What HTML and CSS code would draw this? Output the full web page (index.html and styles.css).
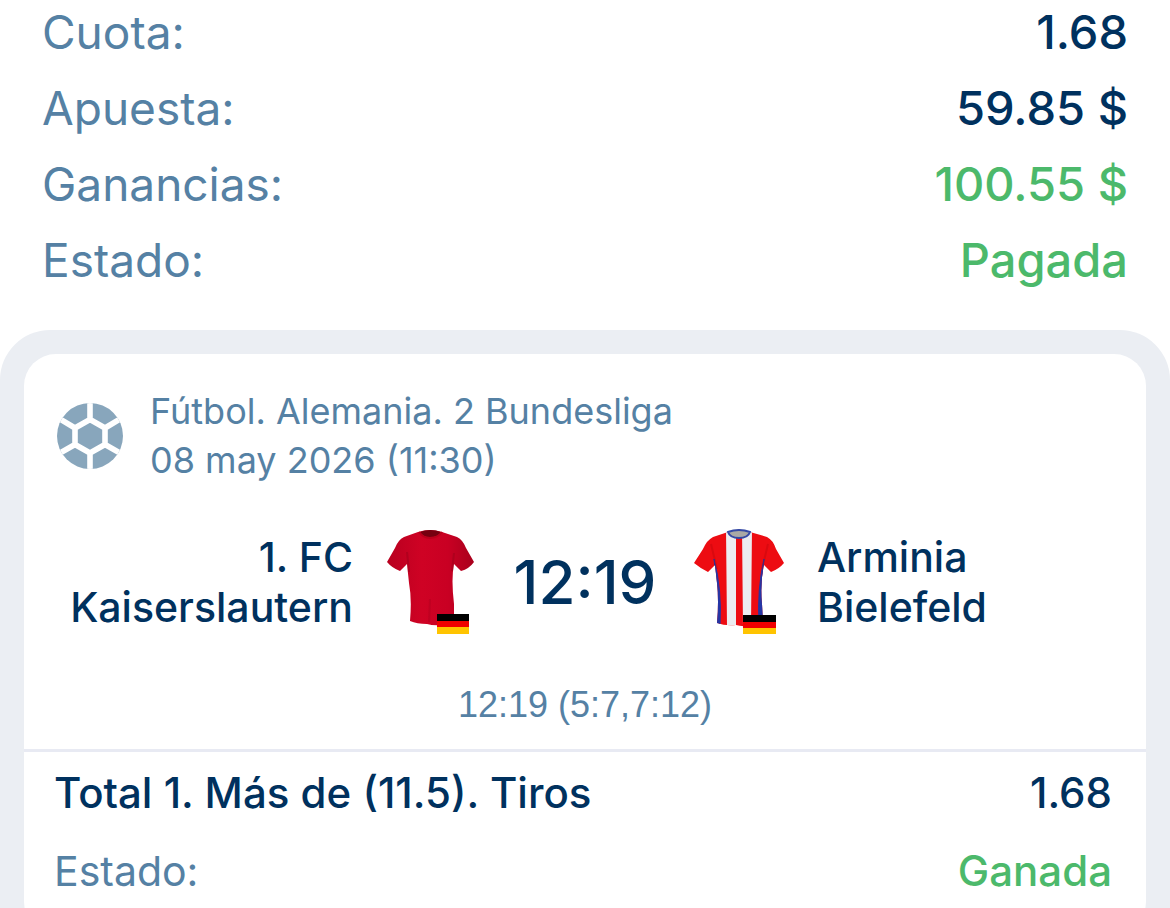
FILE: index.html
```
<!DOCTYPE html>
<html lang="es">
<head>
    <meta charset="UTF-8">
    <meta name="viewport" content="width=device-width, initial-scale=1.0">
    <title>Detalles de la apuesta</title>
    <link rel="stylesheet" href="styles.css">
</head>
<body>
    <dl class="summary">
        <div class="summary-row">
            <dt>Cuota:</dt>
            <dd>1.68</dd>
        </div>
        <div class="summary-row">
            <dt>Apuesta:</dt>
            <dd>59.85 $</dd>
        </div>
        <div class="summary-row">
            <dt>Ganancias:</dt>
            <dd class="won">100.55 $</dd>
        </div>
        <div class="summary-row">
            <dt>Estado:</dt>
            <dd class="won">Pagada</dd>
        </div>
    </dl>

    <main class="events">
        <article class="card">
            <header class="event-header">
                <svg class="sport-icon" viewBox="0 0 66 66" aria-hidden="true">
                    <defs>
                        <clipPath id="ball"><circle cx="33" cy="33" r="33"/></clipPath>
                    </defs>
                    <g clip-path="url(#ball)">
                        <rect width="66" height="66" fill="#88a6bc"/>
                        <path d="M33 16.5 L48 25 V41.5 L33 50 L18 41.5 V25 Z M33 17 V0 M48 25 L68 13 M48 41.5 L68 53 M33 50 V66 M18 41.5 L-2 53 M18 25 L-2 13" fill="none" stroke="#fff" stroke-width="5.6"/>
                    </g>
                </svg>
                <div class="event-info">
                    <div>Fútbol. Alemania. 2 Bundesliga</div>
                    <time datetime="2026-05-08T11:30">08 may 2026 (11:30)</time>
                </div>
            </header>

            <div class="match">
                <div class="team home">1. FC Kaiserslautern</div>
                <svg class="shirt" viewBox="0 0 92 106" aria-hidden="true">
                    <defs>
                        <linearGradient id="red">
                            <stop offset="0" stop-color="#b8001f"/>
                            <stop offset="0.4" stop-color="#cf0224"/>
                            <stop offset="0.7" stop-color="#c90023"/>
                            <stop offset="1" stop-color="#a8001c"/>
                        </linearGradient>
                    </defs>
                    <path d="M33 3 Q45 -1 57 3 L72 8 Q78 11 81 19 L89 33 Q84 40 76 42 L69 35 Q66 50 69 75 V94 Q52 98 42 95 Q32 95 25 92 Q27 70 24 54 L22 35 L15 42 Q7 39 2 33 L10 19 Q13 11 19 8 Z" fill="url(#red)"/>
                    <path d="M35 3 Q45 -1 56 3 Q53 8 45 8 Q38 8 35 3 Z" fill="#760010"/>
                    <path d="M34 3 Q38 9 45 9 Q53 9 57 3" fill="none" stroke="#bb001c" stroke-width="2"/>
                    <path d="M22 23 L24 43 M69 24 L67 42" fill="none" stroke="#8c0018" stroke-opacity="0.35" stroke-width="2"/>
                    <path d="M45 70 L44 93" fill="none" stroke="#8c0018" stroke-opacity="0.2" stroke-width="2"/>
                    <rect x="52" y="85" width="32" height="7" fill="#000"/>
                    <rect x="52" y="92" width="32" height="6" fill="#f00000"/>
                    <rect x="52" y="98" width="32" height="7" fill="#ffc400"/>
                </svg>
                <div class="score">12:19</div>
                <svg class="shirt" viewBox="0 0 92 106" aria-hidden="true">
                    <defs>
                        <clipPath id="torso">
                            <path d="M35 3 Q46 -1 57 3 L74 8 Q80 11 83 20 L91 34 Q86 40 78 43 L71 36 Q67 54 69 75 L70 94 Q52 99 43 96 Q32 97 24 94 Q26 72 24 54 L22 36 L15 43 Q7 39 1 34 L10 20 Q14 11 20 8 Z"/>
                        </clipPath>
                    </defs>
                    <g clip-path="url(#torso)">
                        <rect width="92" height="106" fill="#ed0c12"/>
                        <path d="M21 30 Q25 56 23 96 H27 Q29 60 21 30 Z M71 30 Q67 56 71 96 H66 Q64 60 71 30 Z" fill="#2536a5" stroke="#2536a5" stroke-width="1"/>
                        <path d="M33 0 H43 V98 H34 Z M49 0 H59 L58 98 H50 Z" fill="#ececf0"/>
                        <path d="M18 15 L24 40 M75 15 L69 40" fill="none" stroke="#a50008" stroke-opacity="0.25" stroke-width="2"/>
                    </g>
                    <path d="M35 3 Q46 -1 57 3 Q55 9 46 9 Q37 9 35 3 Z" fill="#aaa9a5" stroke="#3549a5" stroke-width="2"/>
                    <rect x="50" y="86" width="33" height="7" fill="#000"/>
                    <rect x="50" y="93" width="33" height="6" fill="#f00000"/>
                    <rect x="50" y="99" width="33" height="6" fill="#ffc400"/>
                </svg>
                <div class="team">Arminia Bielefeld</div>
            </div>

            <div class="periods">12:19 (5:7,7:12)</div>

            <dl class="bet">
                <div class="bet-row">
                    <dt class="market">Total 1. Más de (11.5). Tiros</dt>
                    <dd>1.68</dd>
                </div>
                <div class="bet-row">
                    <dt>Estado:</dt>
                    <dd class="won">Ganada</dd>
                </div>
            </dl>
        </article>
    </main>
</body>
</html>
```
FILE: styles.css
```
* {
    box-sizing: border-box;
}

body {
    margin: 0;
    background: #fff;
    color: #00315e;
    font-family: Inter, "Liberation Sans", sans-serif;
}

dl,
dd {
    margin: 0;
}

dt {
    color: #5581a4;
}

dd {
    font-weight: 500;
    text-align: right;
}

dd.won {
    color: #4cb96b;
}

.summary {
    display: flex;
    flex-direction: column;
    gap: 12px;
    padding: 0 42px;
}

.summary-row {
    display: flex;
    justify-content: space-between;
    font-size: 47px;
    line-height: 64px;
}

.summary-row dt {
    font-size: 46px;
}

.events {
    margin-top: 38px;
    padding: 24px;
    background: #ebeef3;
    border-radius: 50px;
}

.card {
    background: #fff;
    border-radius: 32px;
}

.event-header {
    display: flex;
    align-items: center;
    gap: 27px;
    padding: 33px 33px 0;
}

.sport-icon {
    width: 66px;
    height: 66px;
}

.event-info {
    color: #5581a4;
    font-size: 36px;
    line-height: 49px;
}

.match {
    display: grid;
    grid-template-columns: 1fr 92px 152px 92px 1fr;
    align-items: center;
    column-gap: 32px;
    padding: 44px 32px 0;
    font-size: 41px;
    font-weight: 500;
    line-height: 50px;
}

.team {
    width: min-content;
}

.home {
    justify-self: end;
    width: auto;
    text-align: right;
}

.shirt {
    width: 92px;
    height: 106px;
}

.score {
    font-size: 60px;
    text-align: center;
}

.periods {
    margin-top: 46px;
    padding-bottom: 20px;
    border-bottom: 3px solid #e8eaf3;
    color: #5581a4;
    font-family: "Liberation Sans", sans-serif;
    font-size: 36px;
    line-height: 48px;
    text-align: center;
}

.bet {
    padding: 2px 34px 24px 30px;
}

.bet-row {
    display: flex;
    justify-content: space-between;
    font-size: 42px;
    line-height: 78px;
}

.bet-row dt {
    font-size: 41px;
}

.bet-row .market {
    color: #00315e;
    font-size: 42px;
    font-weight: 500;
}
```
